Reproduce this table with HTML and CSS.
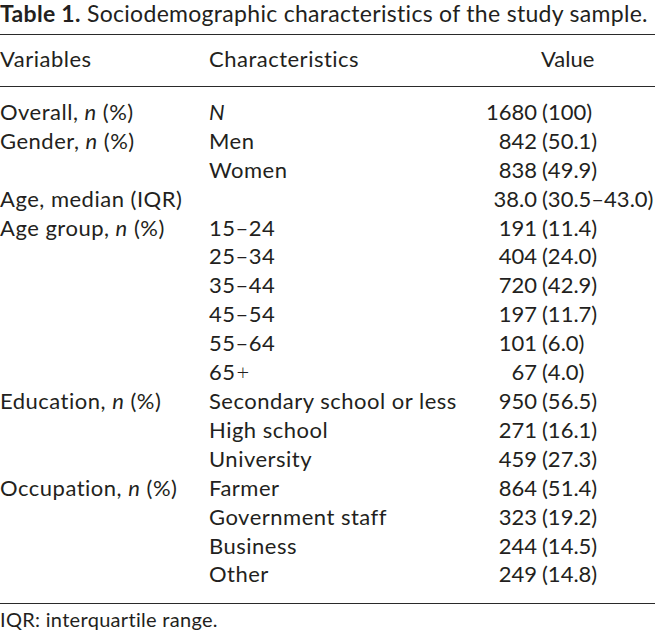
FILE: index.html
```html
<!DOCTYPE html>
<html>
<head>
<meta charset="utf-8">
<link rel="stylesheet" href="styles.css">
</head>
<body>
<div class="caption"><span class="label">Table 1.</span> Sociodemographic characteristics of the study sample.</div>
<div class="table">
  <div class="head">
    <div class="c1">Variables</div>
    <div class="c2">Characteristics</div>
    <div class="c3 vhead">Value</div>
  </div>
  <div class="body">
    <div class="c1">Overall, <i>n</i> (%)</div><div class="c2"><i>N</i></div><div class="c3"><span class="num">1680</span><span>(100)</span></div>
    <div class="c1">Gender, <i>n</i> (%)</div><div class="c2">Men</div><div class="c3"><span class="num">842</span><span>(50.1)</span></div>
    <div class="c1"></div><div class="c2">Women</div><div class="c3"><span class="num">838</span><span>(49.9)</span></div>
    <div class="c1">Age, median (IQR)</div><div class="c2"></div><div class="c3"><span class="num">38.0</span><span>(30.5–43.0)</span></div>
    <div class="c1">Age group, <i>n</i> (%)</div><div class="c2">15–24</div><div class="c3"><span class="num">191</span><span>(11.4)</span></div>
    <div class="c1"></div><div class="c2">25–34</div><div class="c3"><span class="num">404</span><span>(24.0)</span></div>
    <div class="c1"></div><div class="c2">35–44</div><div class="c3"><span class="num">720</span><span>(42.9)</span></div>
    <div class="c1"></div><div class="c2">45–54</div><div class="c3"><span class="num">197</span><span>(11.7)</span></div>
    <div class="c1"></div><div class="c2">55–64</div><div class="c3"><span class="num">101</span><span>(6.0)</span></div>
    <div class="c1"></div><div class="c2">65<span class="plus">+</span></div><div class="c3"><span class="num">67</span><span>(4.0)</span></div>
    <div class="c1">Education, <i>n</i> (%)</div><div class="c2">Secondary school or less</div><div class="c3"><span class="num">950</span><span>(56.5)</span></div>
    <div class="c1"></div><div class="c2">High school</div><div class="c3"><span class="num">271</span><span>(16.1)</span></div>
    <div class="c1"></div><div class="c2">University</div><div class="c3"><span class="num">459</span><span>(27.3)</span></div>
    <div class="c1">Occupation, <i>n</i> (%)</div><div class="c2">Farmer</div><div class="c3"><span class="num">864</span><span>(51.4)</span></div>
    <div class="c1"></div><div class="c2">Government staff</div><div class="c3"><span class="num">323</span><span>(19.2)</span></div>
    <div class="c1"></div><div class="c2">Business</div><div class="c3"><span class="num">244</span><span>(14.5)</span></div>
    <div class="c1"></div><div class="c2">Other</div><div class="c3"><span class="num">249</span><span>(14.8)</span></div>
  </div>
</div>
<div class="note">IQR: interquartile range.</div>
</body>
</html>
```

FILE: styles.css
```css
html, body {
  margin: 0;
  padding: 0;
  background: #ffffff;
}
body {
  font-family: Lato, "Open Sans", sans-serif;
  color: #231f20;
  width: 655px;
  overflow: hidden;
}
.caption {
  font-size: 23px;
  line-height: 27px;
  letter-spacing: 0.3px;
  padding-bottom: 7px;
  white-space: nowrap;
}
.label {
  font-weight: 700;
}
.table {
  border-top: 1px solid #2a2a2a;
  border-bottom: 1px solid #2a2a2a;
  font-size: 22px;
  line-height: 28.9px;
}
.head {
  display: grid;
  grid-template-columns: 209px 277px 1fr;
  padding: 10px 0 12px;
  border-bottom: 1px solid #2a2a2a;
}
.vhead {
  padding-left: 55px;
}
.body {
  display: grid;
  grid-template-columns: 209px 277px 1fr;
  padding: 11px 0 14px;
}
.c1, .c2, .c3 {
  white-space: nowrap;
  min-height: 28.9px;
}
.c1, .c2 {
  letter-spacing: 0.5px;
}
.c3 {
  display: flex;
}
.num {
  display: inline-block;
  min-width: 51px;
  text-align: right;
  margin-right: 5px;
}
.plus {
  font-weight: 300;
  padding-left: 1px;
}
.note {
  font-size: 20px;
  line-height: 24px;
  letter-spacing: 0.3px;
  padding-top: 3px;
}
```
